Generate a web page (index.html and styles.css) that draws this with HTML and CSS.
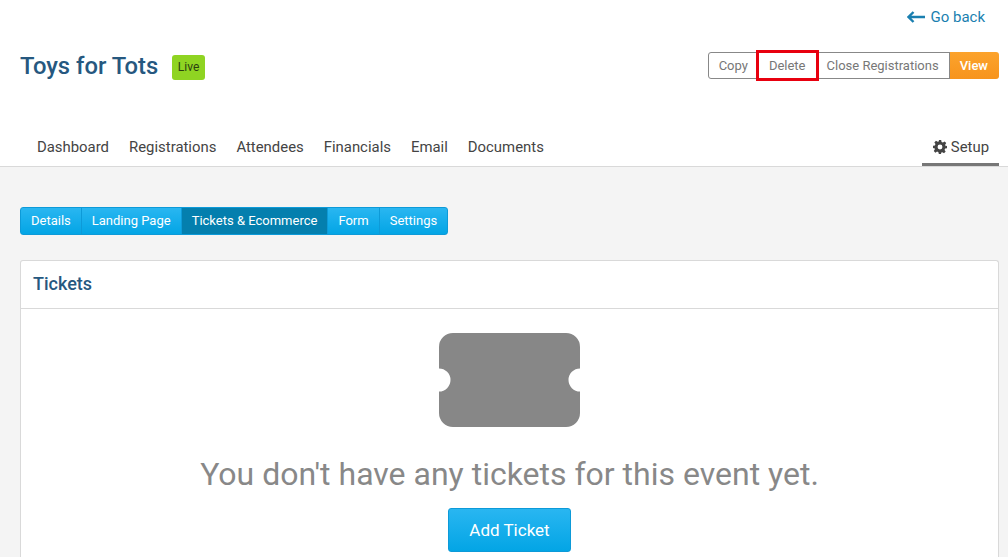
FILE: index.html

```html
<!DOCTYPE html>
<html lang="en">
<head>
  <meta charset="UTF-8">
  <meta name="viewport" content="width=device-width, initial-scale=1.0">
  <title>Toys for Tots - Tickets</title>
  <link rel="stylesheet" href="styles.css">
</head>
<body>
  <header class="top">
    <div class="back-row">
      <a class="back" href="#">
        <svg class="back-icon" width="18" height="12" viewBox="0 0 18 12"><path d="M6.500 1 1.500 6l5 5M1.500 6H18" fill="none" stroke="currentColor" stroke-width="2.400"/></svg>
        Go back
      </a>
    </div>
    <div class="title-row">
      <h1>Toys for Tots</h1>
      <span class="badge">Live</span>
      <div class="actions">
        <a class="act act-copy" href="#">Copy</a>
        <a class="act act-delete" href="#">Delete</a>
        <a class="act" href="#">Close Registrations</a>
        <a class="act act-view" href="#">View</a>
      </div>
    </div>
    <nav class="nav">
      <a href="#">Dashboard</a>
      <a href="#">Registrations</a>
      <a href="#">Attendees</a>
      <a href="#">Financials</a>
      <a href="#">Email</a>
      <a href="#">Documents</a>
      <a class="setup" href="#">
        <svg width="14" height="14" viewBox="0 0 24 24"><path fill="#444" fill-rule="evenodd" d="M10 0h4l.7 3.4 2.3 1 2.9-1.9 2.8 2.8-1.9 2.9 1 2.3L24 10v4l-3.2.7-1 2.3 1.9 2.9-2.8 2.8-2.9-1.9-2.3 1L14 24h-4l-.7-3.2-2.3-1-2.9 1.9-2.8-2.8 1.9-2.9-1-2.3L0 14v-4l3.2-.7 1-2.3-1.9-2.9 2.8-2.8 2.9 1.9 2.3-1zM12 7.8a4.2 4.2 0 1 0 0 8.4 4.2 4.2 0 0 0 0-8.4z"/></svg>
        Setup
      </a>
    </nav>
  </header>

  <main class="content">
    <div class="tabs">
      <a href="#">Details</a>
      <a href="#">Landing Page</a>
      <a class="active" href="#">Tickets &amp; Ecommerce</a>
      <a href="#">Form</a>
      <a href="#">Settings</a>
    </div>

    <section class="panel">
      <h2>Tickets</h2>
      <div class="empty">
        <svg class="ticket" width="141" height="94" viewBox="0 0 141 94"><path fill="#878787" d="M14 0H127A14 14 0 0 1 141 14V35.500A11.500 11.500 0 0 0 141 58.500V80A14 14 0 0 1 127 94H14A14 14 0 0 1 0 80V58.500A11.500 11.500 0 0 0 0 35.500V14A14 14 0 0 1 14 0Z"/></svg>
        <p>You don't have any tickets for this event yet.</p>
        <a class="add" href="#">Add Ticket</a>
      </div>
    </section>
  </main>
</body>
</html>
```

FILE: styles.css

```css
html, body {
  height: 100%;
}
body {
  margin: 0;
  font-family: Roboto, "Liberation Sans", sans-serif;
  background: #f4f4f4;
  color: #444;
  display: flex;
  flex-direction: column;
}
a {
  text-decoration: none;
}
.top {
  background: #fff;
  height: 166px;
  flex: none;
  border-bottom: 1px solid #d9d9d9;
  display: flex;
  flex-direction: column;
}
.back-row {
  display: flex;
  justify-content: flex-end;
  padding: 8px 23px 0 0;
}
.back {
  color: #1a7fb0;
  font-size: 15px;
  line-height: 18px;
  display: flex;
  align-items: center;
  gap: 5px;
}
.title-row {
  display: flex;
  align-items: center;
  margin-top: 26px;
  padding: 0 9px 0 20px;
  height: 28px;
}
h1 {
  margin: 0;
  font-size: 23.8px;
  font-weight: 500;
  color: #26587f;
}
.badge {
  margin: 3px 0 0 14px;
  background: #8fd422;
  color: #2b3f10;
  font-size: 12px;
  line-height: 25px;
  padding: 0 5.5px;
  border-radius: 3px;
}
.actions {
  margin-left: auto;
  align-self: flex-start;
  display: flex;
}
.act {
  font-size: 13px;
  line-height: 25px;
  padding: 0 10px;
  color: #777;
  background: #fff;
  border: 1px solid #888;
  border-left: none;
}
.act-copy {
  border-left: 1px solid #888;
  border-radius: 3px 0 0 3px;
  padding-right: 9px;
}
.act-delete {
  outline: 3px solid #e8000f;
  outline-offset: -1px;
  position: relative;
  padding: 0 10px 0 11px;
}
.act-view {
  background: linear-gradient(#fca32c, #f7941d);
  border: none;
  line-height: 27px;
  color: #fff;
  font-weight: 500;
  padding: 0 11px 0 10px;
  border-radius: 0 3px 3px 0;
}
.nav {
  margin-top: auto;
  display: flex;
  padding: 0 9px 0 27px;
}
.nav a {
  color: #444;
  font-size: 14.9px;
  line-height: 18px;
  padding: 0 10px 10px;
}
.nav .setup {
  margin-left: auto;
  display: flex;
  align-items: center;
  gap: 4px;
  border-bottom: 3px solid #777;
  padding: 0 10px 7px 11px;
}
.content {
  flex: 1;
  min-height: 0;
  display: flex;
  flex-direction: column;
  padding: 40px 9px 0 20px;
}
.tabs {
  align-self: flex-start;
  display: flex;
  border-radius: 3px;
  overflow: hidden;
  background: linear-gradient(#29b6f1, #03a5e5);
  border: 1px solid #0d9ad8;
}
.tabs a {
  color: #fff;
  font-size: 13px;
  line-height: 26px;
  padding: 0 10px;
  border-left: 1px solid #0d9ad8;
}
.tabs a:first-child {
  border-left: none;
}
.tabs .active {
  background: #047fae;
}
.panel {
  flex: 1;
  margin-top: 25px;
  background: #fff;
  border: 1px solid #d9d9d9;
  border-bottom: none;
  border-radius: 3px 3px 0 0;
}
.panel h2 {
  margin: 0;
  padding: 0 12px 2px;
  font-size: 18px;
  font-weight: 500;
  line-height: 45px;
  color: #26587f;
  border-bottom: 1px solid #d9d9d9;
}
.empty {
  display: flex;
  flex-direction: column;
  align-items: center;
  padding-top: 24px;
}
.ticket {
  display: block;
}
.empty p {
  margin: 28px 0 0;
  font-size: 32px;
  line-height: 38px;
  color: #888;
}
.add {
  margin-top: 15px;
  background: linear-gradient(#29b6f1, #03a5e5);
  border: 1px solid #0d9ad8;
  border-radius: 3px;
  color: #fff;
  font-size: 17px;
  line-height: 42px;
  padding: 0 20px;
}
```
